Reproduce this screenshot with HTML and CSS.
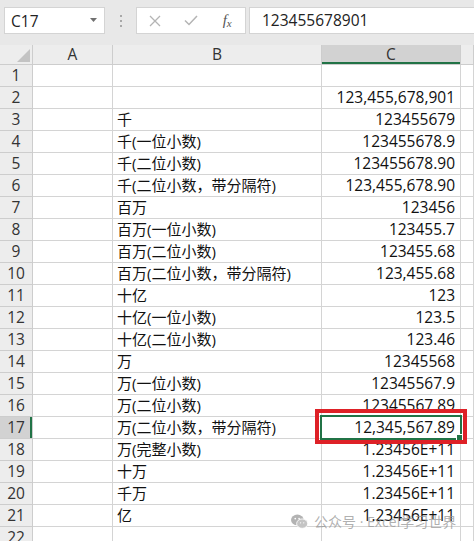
FILE: index.html
```html
<!DOCTYPE html>
<html lang="zh-CN">
<head>
<meta charset="UTF-8" />
<meta name="viewport" content="width=device-width, initial-scale=1" />
<title>数字格式 - 千/百万/十亿</title>
<link rel="stylesheet" href="styles.css">
</head>
<body>

<div class="app">
  <div class="formula-bar">
    <div class="name-box">
      <span>C17</span>
      <svg class="caret" width="7" height="4" viewBox="0 0 7 4"><path d="M0 0h7L3.5 4z" fill="#707070"/></svg>
    </div>
    <div class="grip"><i></i><i></i><i></i></div>
    <div class="fx-buttons">
      <span class="fx-btn">
        <svg width="12" height="12" viewBox="0 0 12 12"><path d="M1 1l10 10M11 1L1 11" stroke="#b4b4b4" stroke-width="1.3" fill="none"/></svg>
      </span>
      <span class="fx-btn">
        <svg width="14" height="11" viewBox="0 0 14 11"><path d="M1 5.5l4 4L13 1" stroke="#b4b4b4" stroke-width="1.5" fill="none"/></svg>
      </span>
      <span class="fx-btn fx-label"><i>f</i><i class="x">x</i></span>
    </div>
    <div class="formula-input">123455678901</div>
  </div>

  <div class="sheet">
    <div class="hd corner"><span class="tri"></span></div>
    <div class="hd col">A</div>
    <div class="hd col">B</div>
    <div class="hd col on">C</div>
    <div class="hd col"></div>

    <div class="hd row">1</div><div class="c"></div><div class="c"></div><div class="c num"></div><div class="c"></div>
    <div class="hd row">2</div><div class="c"></div><div class="c"></div><div class="c num">123,455,678,901</div><div class="c"></div>
    <div class="hd row">3</div><div class="c"></div><div class="c">千</div><div class="c num">123455679</div><div class="c"></div>
    <div class="hd row">4</div><div class="c"></div><div class="c">千(一位小数)</div><div class="c num">123455678.9</div><div class="c"></div>
    <div class="hd row">5</div><div class="c"></div><div class="c">千(二位小数)</div><div class="c num">123455678.90</div><div class="c"></div>
    <div class="hd row">6</div><div class="c"></div><div class="c">千(二位小数，带分隔符)</div><div class="c num">123,455,678.90</div><div class="c"></div>
    <div class="hd row">7</div><div class="c"></div><div class="c">百万</div><div class="c num">123456</div><div class="c"></div>
    <div class="hd row">8</div><div class="c"></div><div class="c">百万(一位小数)</div><div class="c num">123455.7</div><div class="c"></div>
    <div class="hd row">9</div><div class="c"></div><div class="c">百万(二位小数)</div><div class="c num">123455.68</div><div class="c"></div>
    <div class="hd row">10</div><div class="c"></div><div class="c">百万(二位小数，带分隔符)</div><div class="c num">123,455.68</div><div class="c"></div>
    <div class="hd row">11</div><div class="c"></div><div class="c">十亿</div><div class="c num">123</div><div class="c"></div>
    <div class="hd row">12</div><div class="c"></div><div class="c">十亿(一位小数)</div><div class="c num">123.5</div><div class="c"></div>
    <div class="hd row">13</div><div class="c"></div><div class="c">十亿(二位小数)</div><div class="c num">123.46</div><div class="c"></div>
    <div class="hd row">14</div><div class="c"></div><div class="c">万</div><div class="c num">12345568</div><div class="c"></div>
    <div class="hd row">15</div><div class="c"></div><div class="c">万(一位小数)</div><div class="c num">12345567.9</div><div class="c"></div>
    <div class="hd row">16</div><div class="c"></div><div class="c">万(二位小数)</div><div class="c num">12345567.89</div><div class="c"></div>
    <div class="hd row on">17</div><div class="c"></div><div class="c">万(二位小数，带分隔符)</div>
    <div class="c num active">12,345,567.89<span class="sel-box"><span class="handle"></span></span><span class="mark"></span></div><div class="c"></div>
    <div class="hd row">18</div><div class="c"></div><div class="c">万(完整小数)</div><div class="c num">1.23456E+11</div><div class="c"></div>
    <div class="hd row">19</div><div class="c"></div><div class="c">十万</div><div class="c num">1.23456E+11</div><div class="c"></div>
    <div class="hd row">20</div><div class="c"></div><div class="c">千万</div><div class="c num">1.23456E+11</div><div class="c"></div>
    <div class="hd row">21</div><div class="c"></div><div class="c">亿</div><div class="c num">1.23456E+11</div><div class="c"></div>
    <div class="hd row">22</div><div class="c"></div><div class="c"></div><div class="c num"></div><div class="c"></div>
  </div>

  <div class="watermark">
    <svg width="17" height="15" viewBox="0 0 16 14">
      <ellipse cx="6" cy="5.5" rx="6" ry="5" fill="#b3b3b3"/>
      <ellipse cx="10.5" cy="9" rx="5.2" ry="4.4" fill="#c4c4c4" stroke="#fff" stroke-width="0.8"/>
      <circle cx="4" cy="4.2" r="0.8" fill="#fff"/>
      <circle cx="7.6" cy="4.2" r="0.8" fill="#fff"/>
      <circle cx="9" cy="8.2" r="0.6" fill="#fff"/>
      <circle cx="12" cy="8.2" r="0.6" fill="#fff"/>
    </svg>
    <span>公众号 · Excel学习世界</span>
  </div>
</div>

</body>
</html>
```

FILE: styles.css
```css
  body {
    margin: 0;
    padding: 0;
    background: #fff;
    font-family: "Open Sans", "Noto Sans CJK SC", sans-serif;
    overflow: hidden;
  }
  .app {
    position: relative;
    width: 474px;
    height: 541px;
    overflow: hidden;
  }

  /* formula bar */
  .formula-bar {
    display: flex;
    align-items: flex-start;
    height: 45px;
    box-sizing: border-box;
    padding: 7px 0 0 4px;
    background: #e8e8e8;
  }
  .name-box {
    width: 101px;
    height: 27px;
    box-sizing: border-box;
    display: flex;
    align-items: center;
    justify-content: space-between;
    padding: 0 7px 0 6px;
    background: #fff;
    border: 1px solid #d4d4d4;
    font-size: 15.5px;
    color: #222;
  }
  .caret {
    margin-top: -1px;
  }
  .grip {
    width: 31px;
    height: 27px;
    display: flex;
    flex-direction: column;
    align-items: center;
    justify-content: center;
    gap: 3px;
  }
  .grip i {
    width: 2px;
    height: 2px;
    background: #a8a8a8;
  }
  .fx-buttons {
    width: 110px;
    height: 27px;
    box-sizing: border-box;
    display: flex;
    background: #fff;
    border: 1px solid #d4d4d4;
  }
  .fx-btn {
    flex: 1;
    display: flex;
    align-items: center;
    justify-content: center;
  }
  .fx-label {
    font-family: "Liberation Serif", serif;
    font-size: 15px;
    color: #555;
    padding-left: 1px;
  }
  .fx-label .x {
    font-size: 11px;
    margin-top: 4px;
  }
  .formula-input {
    flex: 1;
    height: 27px;
    box-sizing: border-box;
    margin-left: 3px;
    padding-left: 12px;
    line-height: 25px;
    background: #fff;
    border: 1px solid #d4d4d4;
    border-right: none;
    font-size: 15.5px;
    color: #222;
  }

  /* grid */
  .sheet {
    display: grid;
    grid-template-columns: 33px 80px 209px 139px 1fr;
    grid-template-rows: 20px;
    grid-auto-rows: 22px;
    font-size: 15px;
    color: #111;
  }
  .sheet > div {
    box-sizing: border-box;
    border-right: 1px solid #d4d4d4;
    border-bottom: 1px solid #d4d4d4;
    white-space: nowrap;
    line-height: 21px;
  }
  .c {
    padding-left: 4px;
  }
  .c.num {
    text-align: right;
    padding: 0 5px 0 0;
    font-size: 15.5px;
  }
  .hd {
    background: #ededed;
    color: #333;
    text-align: center;
  }
  .sheet > .hd {
    border-color: #cdcdcd;
    font-size: 15.5px;
  }
  .hd.col {
    line-height: 19px;
  }
  .hd.on {
    background: #d2d2d2;
  }
  .hd.col.on {
    box-shadow: inset 0 -2px #217346;
  }
  .hd.row.on {
    box-shadow: inset -2px 0 #217346;
  }
  .corner {
    position: relative;
  }
  .tri {
    position: absolute;
    right: 2px;
    bottom: 2px;
    width: 0;
    height: 0;
    border-left: 13px solid transparent;
    border-bottom: 13px solid #c3c3c3;
  }

  /* active cell + red highlight around it */
  .active {
    position: relative;
  }
  .sel-box {
    position: absolute;
    left: -2px;
    top: -2px;
    right: -2px;
    bottom: -2px;
    border: 2px solid #217346;
  }
  .handle {
    position: absolute;
    right: -3px;
    bottom: -3px;
    width: 5px;
    height: 5px;
    background: #217346;
    border: 1px solid #fff;
  }
  .mark {
    position: absolute;
    left: -7px;
    top: -8px;
    right: -7px;
    bottom: -6px;
    border: 4px solid #de2127;
  }

  .watermark {
    position: absolute;
    left: 291px;
    top: 511px;
    display: flex;
    align-items: center;
    gap: 6px;
    font-size: 14px;
    color: rgba(150, 150, 150, 0.75);
  }
```
